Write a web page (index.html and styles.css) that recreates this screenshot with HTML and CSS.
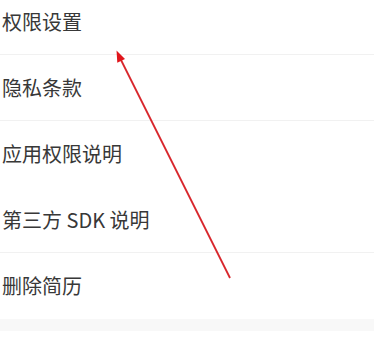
FILE: index.html
```html
<!DOCTYPE html>
<html lang="zh-CN">

<head>
  <meta charset="UTF-8" />
  <meta name="viewport" content="width=device-width, initial-scale=1.0" />
  <title>设置</title>
  <link rel="stylesheet" href="styles.css">
</head>

<body>
  <section class="menu">
    <div class="item line">权限设置</div>
    <div class="item line">隐私条款</div>
    <div class="item">应用权限说明</div>
    <div class="item line">第三方 SDK 说明</div>
    <div class="item">删除简历</div>
  </section>
  <div class="gap"></div>
  <section class="more"></section>

  <!-- 标注箭头 -->
  <svg class="arrow" width="374" height="350" viewBox="0 0 374 350">
    <line x1="230" y1="278" x2="120" y2="58" stroke="#d8262c" stroke-width="1.8" />
    <polygon points="116.5,50.5 125,59 117.3,62.8" fill="#e0161c" />
  </svg>
</body>

</html>
```

FILE: styles.css
```css
html,
body {
  margin: 0;
  height: 100%;
  overflow: hidden;
  background: #fff;
}

body {
  font-family: "Noto Sans CJK SC", "Noto Sans", sans-serif;
  color: #383838;
}

.menu {
  margin-top: -11px;
}

.item {
  height: 66px;
  line-height: 66px;
  padding-left: 2px;
  font-size: 20px;
  box-sizing: border-box;
}

.line {
  border-bottom: 1px solid #f1f1f1;
}

.gap {
  height: 12px;
  background: #f8f8f8;
}

.more {
  height: 19px;
}

.arrow {
  position: absolute;
  left: 0;
  top: 0;
}
```
